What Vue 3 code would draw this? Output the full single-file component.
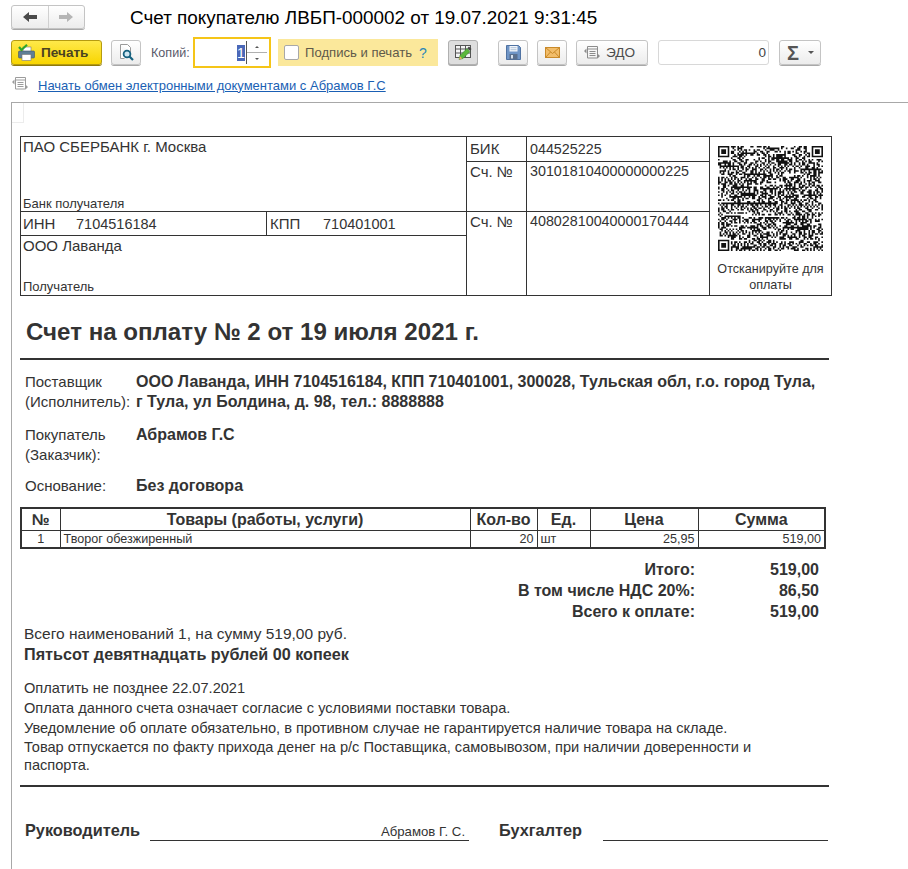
<script setup>
const N = 65
const grid = Array.from({ length: N }, () => Array(N).fill(0))
let seed = 73219
const rnd = () => {
  seed = (seed * 1103515245 + 12345) & 0x7fffffff
  return (seed >> 12) & 1
}
for (let y = 0; y < N; y++) for (let x = 0; x < N; x++) grid[y][x] = rnd()
const finder = (ox, oy) => {
  for (let y = -1; y <= 7; y++) for (let x = -1; x <= 7; x++) {
    const gx = ox + x, gy = oy + y
    if (gx < 0 || gy < 0 || gx >= N || gy >= N) continue
    const ring = x >= 0 && x <= 6 && y >= 0 && y <= 6 && (x === 0 || x === 6 || y === 0 || y === 6)
    const core = x >= 2 && x <= 4 && y >= 2 && y <= 4
    grid[gy][gx] = ring || core ? 1 : 0
  }
}
finder(0, 0); finder(N - 7, 0); finder(0, N - 7)
let qrPath = ''
grid.forEach((row, y) => row.forEach((v, x) => { if (v) qrPath += `M${x} ${y}h1v1h-1z` }))

const supplier = 'ООО Лаванда, ИНН 7104516184, КПП 710401001, 300028, Тульская обл, г.о. город Тула, г Тула, ул Болдина, д. 98, тел.: 8888888'
const totals = [
  { label: 'Итого:', value: '519,00' },
  { label: 'В том числе НДС 20%:', value: '86,50' },
  { label: 'Всего к оплате:', value: '519,00' }
]
const terms = [
  'Оплатить не позднее 22.07.2021',
  'Оплата данного счета означает согласие с условиями поставки товара.',
  'Уведомление об оплате обязательно, в противном случае не гарантируется наличие товара на складе.',
  'Товар отпускается по факту прихода денег на р/с Поставщика, самовывозом, при наличии доверенности и паспорта.'
]
</script>

<template>
  <div class="page">
    <div class="row-title">
      <div class="nav">
        <div class="nav-btn">
          <svg width="14" height="12" viewBox="0 0 14 12"><path d="M0 6 6 1v3h8v4H6v3z" fill="#4a4a4a"/></svg>
        </div>
        <div class="nav-btn">
          <svg width="14" height="12" viewBox="0 0 14 12"><path d="M14 6 8 1v3H0v4h8v3z" fill="#b5b5b5"/></svg>
        </div>
      </div>
      <div class="title">Счет покупателю ЛВБП-000002 от 19.07.2021 9:31:45</div>
    </div>

    <div class="row-tools">
      <div class="btn print">
        <svg width="17" height="17" viewBox="0 0 17 17">
          <rect x="5" y="3" width="8" height="5" fill="#fff" stroke="#777" stroke-width=".6"/>
          <rect x=".5" y="7" width="16" height="7" rx="1" fill="#5f7f96" stroke="#3f5566" stroke-width=".6"/>
          <rect x="4" y="10.5" width="9" height="6" fill="#fff" stroke="#777" stroke-width=".6"/>
          <path d="M1 3 3.5 6 9 .8" fill="none" stroke="#2fa52f" stroke-width="2.2"/>
        </svg>
        <span>Печать</span>
      </div>
      <div class="btn icon ml9">
        <svg width="15" height="17" viewBox="0 0 15 17">
          <path d="M1.5 .5h7l3 3V8M1.5.5v14h4" fill="#fff" stroke="#9a9a9a"/>
          <circle cx="8" cy="10" r="3.4" fill="#cfe6f2" stroke="#15617f" stroke-width="1.8"/>
          <path d="M10.5 12.5 14 16" stroke="#15617f" stroke-width="2.2"/>
        </svg>
      </div>
      <label class="copies-label">Копий:</label>
      <div class="spin-input">
        <span class="selected">1</span>
        <span class="caret"></span>
        <div class="spinner">
          <span class="up"></span>
          <span class="down"></span>
        </div>
      </div>
      <div class="sign">
        <span class="check"></span>
        <span>Подпись и печать</span>
        <span class="help">?</span>
      </div>
      <div class="btn icon pressed ml10">
        <svg width="17" height="15" viewBox="0 0 17 15">
          <rect x=".5" y=".5" width="15" height="12" fill="#f4f4f4" stroke="#555"/>
          <path d="M.5 4h15M.5 8h15M5.5.5v12M10.5.5v12" stroke="#555" fill="none"/>
          <path d="M4 14.5 5 10.5 12 3.5 15 6.5 8 13.5z" fill="#5cb83c" stroke="#2f7a2a" stroke-width=".5"/>
          <path d="M12.5 3 14 1.5 16.5 4 15 5.7z" fill="#444"/>
          <path d="M4 14.5 5 11.2 7.3 13.5z" fill="#e8b060"/>
        </svg>
      </div>
      <div class="btn icon ml20">
        <svg width="15" height="15" viewBox="0 0 15 15">
          <path d="M.5.5h12l2 2v12H.5z" fill="#6f95c6" stroke="#4f72a2"/>
          <rect x="3.5" y="1" width="8" height="5.5" fill="#f3f6fa"/>
          <path d="M4.5 2.7h6M4.5 4.7h6" stroke="#9db4d0" stroke-width=".8"/>
          <rect x="3.5" y="9" width="8" height="5.5" fill="#5a6f8c"/>
          <rect x="5" y="10" width="2" height="3.5" fill="#d6e0ec"/>
        </svg>
      </div>
      <div class="btn icon ml9">
        <svg width="15" height="11" viewBox="0 0 15 11">
          <rect x=".5" y=".5" width="14" height="10" fill="#f2bd6a" stroke="#c98a2a"/>
          <path d="M.5.5 7.5 6.5 14.5.5M.5 10.5l5-5.5M14.5 10.5l-5-5.5" fill="none" stroke="#c98a2a"/>
        </svg>
      </div>
      <div class="btn edo ml9">
        <svg class="edo-icon" width="16" height="16" viewBox="0 0 16 16">
          <path d="M3.5 1.5h10v2.5h-10zM3.5 4v9h10V4M5.5 6.5h6M5.5 8.5h6M5.5 10.5h6" fill="none" stroke="#8c8c8c"/>
          <path d="M0 6l2.5-2.5V8.5zM16 11l-2.5 2.5V8.5z" fill="#8c8c8c"/>
        </svg>
        <span>ЭДО</span>
      </div>
      <div class="sum-input">0</div>
      <div class="btn sigma ml10">
        <span class="sigma-glyph">Σ</span>
        <span class="arrow"></span>
      </div>
    </div>

    <div class="row-link">
      <svg width="16" height="16" viewBox="0 0 16 16">
        <path d="M3.5 1.5h10v2.5h-10zM3.5 4v9h10V4M5.5 6.5h6M5.5 8.5h6M5.5 10.5h6" fill="none" stroke="#9c9c9c"/>
        <path d="M0 6l2.5-2.5V8.5zM16 11l-2.5 2.5V8.5z" fill="#9c9c9c"/>
      </svg>
      <a class="link">Начать обмен электронными документами с Абрамов Г.С</a>
    </div>

    <div class="sheet">
      <div class="corner"></div>
      <div class="doc">
        <table class="bank">
          <colgroup>
            <col class="c1" /><col class="c2" /><col class="c3" /><col class="c4" /><col class="c5" />
          </colgroup>
          <tbody>
            <tr class="r1">
              <td colspan="2" rowspan="2" class="stack">
                <div class="big">ПАО СБЕРБАНК г. Москва</div>
                <div class="small">Банк получателя</div>
              </td>
              <td class="big pad3">БИК</td>
              <td class="num pad3">044525225</td>
              <td rowspan="4" class="qr-cell">
                <svg class="qr" :viewBox="`0 0 ${N} ${N}`"><path :d="qrPath" fill="#111"/></svg>
                <div class="qr-text">Отсканируйте для оплаты</div>
              </td>
            </tr>
            <tr class="r2">
              <td class="big top pad3">Сч. №</td>
              <td class="num top pad3">30101810400000000225</td>
            </tr>
            <tr class="r3">
              <td class="big"><span class="tax-label">ИНН</span><span class="tax-value">7104516184</span></td>
              <td class="big pad3"><span class="tax-label">КПП</span><span class="tax-value">710401001</span></td>
              <td rowspan="2" class="big top pad3">Сч. №</td>
              <td rowspan="2" class="num top pad3">40802810040000170444</td>
            </tr>
            <tr class="r4">
              <td colspan="2" class="stack">
                <div class="big">ООО Лаванда</div>
                <div class="small">Получатель</div>
              </td>
            </tr>
          </tbody>
        </table>

        <h1 class="heading">Счет на оплату № 2 от 19 июля 2021 г.</h1>
        <div class="rule"></div>

        <div class="party first">
          <div class="party-label">Поставщик (Исполнитель):</div>
          <div class="party-value">{{ supplier }}</div>
        </div>
        <div class="party buyer">
          <div class="party-label">Покупатель (Заказчик):</div>
          <div class="party-value">Абрамов Г.С</div>
        </div>
        <div class="party basis">
          <div class="party-label">Основание:</div>
          <div class="party-value">Без договора</div>
        </div>

        <table class="goods">
          <colgroup>
            <col class="g1" /><col class="g2" /><col class="g3" /><col class="g4" /><col class="g5" /><col class="g6" />
          </colgroup>
          <thead>
            <tr>
              <th>№</th><th>Товары (работы, услуги)</th><th>Кол-во</th><th>Ед.</th><th>Цена</th><th>Сумма</th>
            </tr>
          </thead>
          <tbody>
            <tr>
              <td class="center">1</td>
              <td>Творог обезжиренный</td>
              <td class="right">20</td>
              <td>шт</td>
              <td class="right">25,95</td>
              <td class="right">519,00</td>
            </tr>
          </tbody>
        </table>

        <div class="totals">
          <div v-for="t in totals" :key="t.label" class="total-row">
            <span class="total-label">{{ t.label }}</span>
            <span class="total-value">{{ t.value }}</span>
          </div>
        </div>

        <div class="sum-text">Всего наименований 1, на сумму 519,00 руб.</div>
        <div class="sum-words">Пятьсот девятнадцать рублей 00 копеек</div>

        <div class="terms">
          <div v-for="t in terms" :key="t">{{ t }}</div>
        </div>

        <div class="rule rule-bottom"></div>

        <div class="signs">
          <span class="sign-label">Руководитель</span>
          <span class="sign-line first-line"><span>Абрамов Г. С.</span></span>
          <span class="sign-label second">Бухгалтер</span>
          <span class="sign-line second-line"></span>
        </div>
      </div>
    </div>
  </div>
</template>

<style>
html, body { margin: 0; background: #fff; }
</style>

<style scoped>
.page {
  width: 908px;
  height: 869px;
  overflow: hidden;
  box-sizing: border-box;
  padding: 5px 0 0 11px;
  background: #fff;
  font-family: "Liberation Sans", Arial, sans-serif;
  color: #333;
}
.row-title { display: flex; align-items: center; height: 24px; }
.nav {
  display: flex;
  width: 74px;
  height: 24px;
  box-sizing: border-box;
  border: 1px solid #c4c4c4;
  border-radius: 3px;
  box-shadow: 0 1px 0 #a8a8a8;
  background: linear-gradient(#fff, #ececec);
}
.nav-btn { flex: 1; display: flex; align-items: center; justify-content: center; }
.nav-btn + .nav-btn { border-left: 1px solid #d0d0d0; }
.title { margin-left: 45px; margin-top: 2px; font-size: 18.9px; color: #000; white-space: nowrap; }

.row-tools { display: flex; align-items: center; height: 31px; margin-top: 8px; }
.btn {
  display: flex;
  align-items: center;
  justify-content: center;
  box-sizing: border-box;
  height: 25px;
  border: 1px solid #c4c4c4;
  border-radius: 3px;
  box-shadow: 0 1px 0 #a8a8a8;
  background: linear-gradient(#fff, #ececec);
  font-size: 13.6px;
  color: #4d4d4d;
}
.icon { width: 30px; }
.ml9 { margin-left: 9px; }
.ml10 { margin-left: 10px; }
.ml20 { margin-left: 20px; }
.print {
  width: 91px;
  justify-content: flex-start;
  padding-left: 6px;
  gap: 6px;
  border-color: #b59b10;
  box-shadow: 0 1px 0 #8f7a0a;
  background: linear-gradient(#ffe94a, #f8d500);
  font-weight: bold;
  font-size: 13.6px;
  color: #4a4320;
}
.copies-label { margin-left: 10px; width: 42px; font-size: 12.6px; color: #5a5a6a; }
.spin-input {
  display: flex;
  align-items: center;
  justify-content: flex-end;
  box-sizing: border-box;
  width: 78px;
  height: 31px;
  border: 2px solid #f5c518;
  background: #fff;
  font-size: 14px;
  padding-right: 2px;
}
.selected { width: 8px; height: 16px; line-height: 16px; background: #4a68b8; color: #fff; text-align: center; }
.caret { width: 1px; height: 23px; background: #555; margin-left: 1px; }
.spinner { position: relative; width: 20px; height: 25px; }
.spinner::before {
  content: "";
  position: absolute;
  left: 0; right: 0; top: 12px;
  height: 1px;
  background: #b0b0b0;
}
.up, .down { position: absolute; left: 8px; width: 0; height: 0; border-left: 2px solid transparent; border-right: 2px solid transparent; }
.up { top: 6px; border-bottom: 2px solid #555; }
.down { bottom: 5px; border-top: 2px solid #555; }
.sign {
  display: flex;
  align-items: center;
  box-sizing: border-box;
  width: 160px;
  height: 27px;
  margin-left: 7px;
  padding-left: 6px;
  background: #fbe89b;
  font-size: 13.1px;
  color: #5f5a4a;
}
.check {
  box-sizing: border-box;
  width: 15px;
  height: 15px;
  margin-right: 6px;
  border: 1px solid #a8a8a8;
  border-radius: 2px;
  background: #fff;
}
.help { margin-left: 7px; color: #2a86b8; font-size: 14px; }
.pressed { background: #dedede; border-color: #b0b0b0; }
.edo { width: 72px; justify-content: flex-start; padding-left: 7px; gap: 6px; }
.edo-icon { flex: none; }
.sum-input {
  box-sizing: border-box;
  width: 111px;
  height: 25px;
  margin-left: 10px;
  padding-right: 2px;
  border: 1px solid #d8d8d8;
  border-radius: 3px;
  text-align: right;
  line-height: 23px;
  font-size: 13.5px;
  color: #444;
}
.sigma { width: 42px; gap: 9px; justify-content: flex-start; padding-left: 7px; }
.sigma-glyph { font-size: 20px; color: #555; font-weight: bold; line-height: 20px; }
.arrow { width: 0; height: 0; border-left: 3px solid transparent; border-right: 3px solid transparent; border-top: 3px solid #555; }

.row-link { display: flex; align-items: center; gap: 10px; height: 16px; margin-top: 8px; padding-left: 1px; }
.link {
  margin-top: 2px;
  font-size: 13px;
  color: #1a5fb4;
  text-decoration: underline;
  white-space: nowrap;
}

.sheet {
  position: relative;
  margin-top: 10px;
  height: 767px;
  border-top: 1px solid #a8a8a8;
  border-left: 1px solid #a8a8a8;
}
.corner {
  position: absolute;
  left: 0;
  top: 0;
  width: 11px;
  height: 19px;
  border-right: 1px solid #ececec;
  border-bottom: 1px solid #ececec;
}
.doc { padding: 33px 0 0 8px; width: 812px; }

.bank {
  table-layout: fixed;
  width: 811px;
  height: 159px;
  border-collapse: collapse;
  color: #333;
}
.bank td { border: 1px solid #333; padding: 0 2px; vertical-align: middle; white-space: nowrap; }
.bank td.pad3 { padding-left: 3px; }
.c1 { width: 246px; }
.c2 { width: 200px; }
.c3 { width: 60px; }
.c4 { width: 183px; }
.c5 { width: 122px; }
.r1 { height: 25px; }
.r2 { height: 50px; }
.r3 { height: 24px; }
.r4 { height: 60px; }
.bank td.stack { position: relative; vertical-align: top; }
.bank td.stack .big { margin-top: 1px; }
.bank td.stack .small { position: absolute; left: 2px; bottom: 0; }
.r4 td.stack .small { bottom: 1px; }
.bank td.top { vertical-align: top; padding-top: 1px; }
.big { font-size: 15px; line-height: 18px; }
.small { font-size: 13px; line-height: 15px; }
.num { font-size: 14.3px; line-height: 16px; }
.tax-label { display: inline-block; width: 53px; }
.tax-value { font-size: 14.5px; }
.bank td.qr-cell { vertical-align: top; text-align: center; padding: 9px 0 0; white-space: normal; }
.qr { display: block; width: 105px; height: 105px; margin: 0 auto; }
.qr-text { margin-top: 10px; font-size: 12.6px; line-height: 16px; padding: 0 2px; }

.heading { margin: 22px 0 0 6px; font-size: 24.1px; line-height: 27px; font-weight: bold; color: #333; }
.rule { height: 2px; width: 809px; margin-top: 13px; background: #333; }

.party { display: flex; line-height: 20px; }
.party-label { width: 111px; margin-left: 5px; font-size: 15px; }
.party-value { width: 690px; font-weight: bold; font-size: 16px; }
.first { margin-top: 12px; }
.buyer { margin-top: 13px; }
.basis { margin-top: 11px; }

.goods {
  table-layout: fixed;
  width: 804px;
  margin-top: 11px;
  border-collapse: collapse;
  border: 2px solid #333;
}
.goods th, .goods td { border: 1px solid #333; padding: 0 3px; overflow: hidden; white-space: nowrap; }
.goods th { height: 21px; font-size: 16px; line-height: 18px; color: #333; }
.goods td { height: 16px; font-size: 12.6px; line-height: 14px; }
.g1 { width: 39px; }
.g2 { width: 410px; }
.g3 { width: 67px; }
.g4 { width: 53px; }
.g5 { width: 108px; }
.g6 { width: 127px; }
.center { text-align: center; }
.right { text-align: right; }

.totals { margin-top: 10px; }
.total-row { display: flex; justify-content: flex-end; width: 799px; height: 21px; line-height: 21px; font-size: 16px; font-weight: bold; }
.total-value { width: 124px; text-align: right; }

.sum-text { margin: 2px 0 0 4px; font-size: 15.5px; line-height: 20px; }
.sum-words { margin-left: 4px; font-size: 16.2px; line-height: 20px; font-weight: bold; }

.terms { margin: 14px 0 0 4px; width: 790px; font-size: 14.6px; line-height: 20px; }
.terms div:last-child { line-height: 18px; }
.rule-bottom { margin-top: 11px; }

.signs { display: flex; align-items: flex-end; margin-top: 36px; height: 18px; }
.sign-label { font-size: 16.3px; font-weight: bold; line-height: 18px; margin: 0 0 2px 5px; }
.sign-label.second { margin-left: 30px; }
.sign-line {
  display: block;
  box-sizing: border-box;
  height: 18px;
  border-bottom: 1px solid #333;
  text-align: right;
  font-size: 13.2px;
  line-height: 18px;
}
.first-line { width: 319px; margin-left: 10px; padding-right: 4px; }
.second-line { width: 225px; margin-left: 21px; }
</style>
